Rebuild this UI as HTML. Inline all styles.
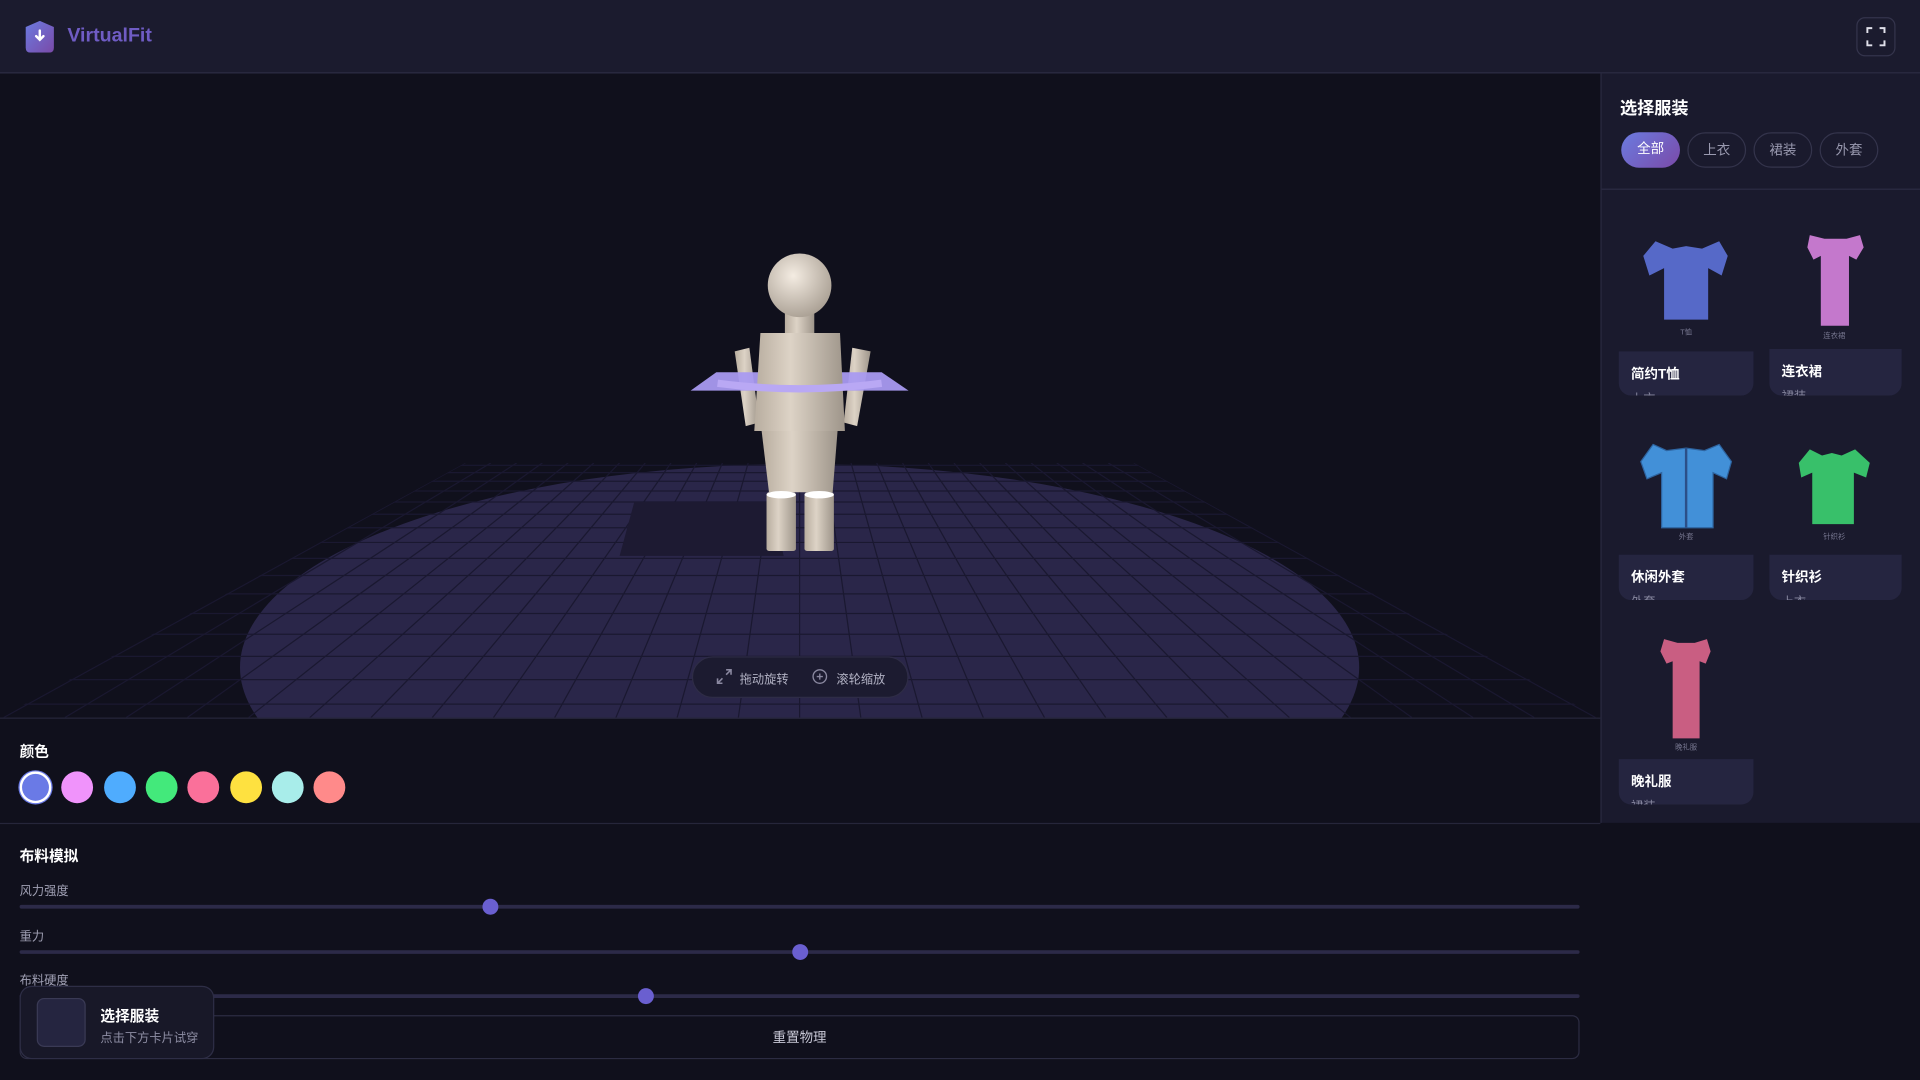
<!DOCTYPE html>
<html><head><meta charset="utf-8">
<style>
*{margin:0;padding:0;box-sizing:border-box}
html,body{width:1920px;height:1080px;overflow:hidden;background:#10101c}
#w{position:absolute;left:0;top:0;width:1568px;height:882px;transform:scale(1.22449);transform-origin:0 0;font-family:"Liberation Sans","Noto Sans CJK SC",sans-serif;color:#e8e8f0}
.a{position:absolute}
.hdr{left:0;top:0;width:1568px;height:60px;background:#1b1b2e;border-bottom:1px solid #2c2c44}
.side{left:1307px;top:60px;width:261px;height:612px;background:#1a1a2d;border-left:1px solid #2a2a40}
.pill{position:absolute;top:48px;height:29px;border:1px solid #34344c;border-radius:15px;font-size:11px;color:#9a9ab0;text-align:center;line-height:29px}
.lab{position:absolute;background:#252540;border-radius:0 0 10px 10px;overflow:hidden}
.lab b{position:absolute;left:10px;top:10px;font-size:11px;color:#fff}
.lab i{position:absolute;left:10px;top:30px;font-size:10px;color:#8888a0;font-style:normal}
.cap{position:absolute;font-size:6px;color:#777790;text-align:center;width:60px}
.dot{position:absolute;top:630px;width:26px;height:26px;border-radius:50%}
.trk{position:absolute;left:16px;width:1274px;height:3px;background:#2c2a48;border-radius:2px}
.knob{position:absolute;width:13px;height:13px;border-radius:50%;background:#6a5fd0}
.sl{position:absolute;left:16px;font-size:10px;color:#a0a0b4}
</style></head><body><div id="w">
<div class="a hdr"></div>
<svg class="a" style="left:20px;top:17px" width="25" height="26" viewBox="0 0 25 26"><defs><linearGradient id="g" x1="0" y1="0" x2="1" y2="1"><stop offset="0" stop-color="#6b7be0"/><stop offset="1" stop-color="#7a4aa8"/></linearGradient></defs><path d="M1 5 L12.5 0 L24 5 L24 22 Q24 26 20 26 L5 26 Q1 26 1 22Z" fill="url(#g)"/><path d="M12.5 8v7M9.5 12.5l3 3 3-3" stroke="#fff" stroke-width="2" fill="none" stroke-linecap="round"/></svg>
<div class="a" style="left:55px;top:21px;font-size:16px;font-weight:bold;color:#6f5cc4">VirtualFit</div>
<div class="a" style="left:1516px;top:14px;width:32px;height:32px;border:1px solid #34344c;border-radius:7px"></div>
<svg class="a" style="left:1524px;top:22px" width="16" height="16" viewBox="0 0 16 16" fill="none" stroke="#e0e0ea" stroke-width="1.6"><path d="M1 5V1h4M11 1h4v4M15 11v4h-4M5 15H1v-4"/></svg>

<svg class="a" style="left:0;top:60px" width="1306" height="527" viewBox="0 60 1306 527">
<defs><clipPath id="c"><polygon points="380,378 926,378 1306,586 0,586"/></clipPath>
<radialGradient id="sk" cx=".4" cy=".35" r=".7"><stop offset="0" stop-color="#f4ece2"/><stop offset="1" stop-color="#a89e92"/></radialGradient>
<linearGradient id="bd" x1="0" x2="1"><stop offset="0" stop-color="#b8ad9f"/><stop offset=".4" stop-color="#ddd3c6"/><stop offset="1" stop-color="#9e958a"/></linearGradient></defs>
<rect x="0" y="60" width="1306" height="527" fill="#10101c"/>
<ellipse cx="653" cy="545" rx="457" ry="166" fill="#2a2649"/>
<g clip-path="url(#c)" stroke="#1a1830" stroke-width="1">
<line x1="0" y1="380" x2="1306" y2="380"/><line x1="0" y1="386" x2="1306" y2="386"/><line x1="0" y1="393" x2="1306" y2="393"/><line x1="0" y1="401" x2="1306" y2="401"/><line x1="0" y1="410" x2="1306" y2="410"/><line x1="0" y1="420" x2="1306" y2="420"/><line x1="0" y1="431" x2="1306" y2="431"/><line x1="0" y1="443" x2="1306" y2="443"/><line x1="0" y1="456" x2="1306" y2="456"/><line x1="0" y1="470" x2="1306" y2="470"/><line x1="0" y1="485" x2="1306" y2="485"/><line x1="0" y1="501" x2="1306" y2="501"/><line x1="0" y1="518" x2="1306" y2="518"/><line x1="0" y1="536" x2="1306" y2="536"/><line x1="0" y1="555" x2="1306" y2="555"/><line x1="0" y1="575" x2="1306" y2="575"/>
<line x1="380" y1="378" x2="3" y2="586"/><line x1="401" y1="378" x2="53" y2="586"/><line x1="422" y1="378" x2="103" y2="586"/><line x1="443" y1="378" x2="153" y2="586"/><line x1="464" y1="378" x2="203" y2="586"/><line x1="485" y1="378" x2="253" y2="586"/><line x1="506" y1="378" x2="303" y2="586"/><line x1="527" y1="378" x2="353" y2="586"/><line x1="548" y1="378" x2="403" y2="586"/><line x1="569" y1="378" x2="453" y2="586"/><line x1="590" y1="378" x2="503" y2="586"/><line x1="611" y1="378" x2="553" y2="586"/><line x1="632" y1="378" x2="603" y2="586"/><line x1="653" y1="378" x2="653" y2="586"/><line x1="674" y1="378" x2="703" y2="586"/><line x1="695" y1="378" x2="753" y2="586"/><line x1="716" y1="378" x2="803" y2="586"/><line x1="737" y1="378" x2="853" y2="586"/><line x1="758" y1="378" x2="903" y2="586"/><line x1="779" y1="378" x2="953" y2="586"/><line x1="800" y1="378" x2="1003" y2="586"/><line x1="821" y1="378" x2="1053" y2="586"/><line x1="842" y1="378" x2="1103" y2="586"/><line x1="863" y1="378" x2="1153" y2="586"/><line x1="884" y1="378" x2="1203" y2="586"/><line x1="905" y1="378" x2="1253" y2="586"/><line x1="926" y1="378" x2="1303" y2="586"/>
</g>
<polygon points="518,410 630,410 640,454 506,454" fill="#1d1a32"/>
<polygon points="600,287 612,284 620,345 609,348" fill="url(#bd)"/>
<polygon points="696,284 711,287 700,348 689,345" fill="url(#bd)"/>
<polygon points="585,304 720,304 742,319 564,319" fill="#a99af0" opacity=".95"/>
<rect x="641" y="255" width="24" height="18" fill="url(#bd)"/>
<circle cx="653" cy="233" r="26" fill="url(#sk)"/>
<polygon points="621,272 686,272 690,352 616,352" fill="url(#bd)"/>
<path d="M586 313 Q653 322 720 313" stroke="#b9a8f4" stroke-width="6" fill="none"/>
<polygon points="622,352 684,352 680,402 628,402" fill="url(#bd)"/>
<rect x="626" y="402" width="24" height="48" rx="2" fill="url(#bd)"/>
<rect x="657" y="402" width="24" height="48" rx="2" fill="url(#bd)"/>
<ellipse cx="638" cy="404" rx="12" ry="3" fill="#fff"/><ellipse cx="669" cy="404" rx="12" ry="3" fill="#fff"/>
</svg>

<div class="a" style="left:565px;top:536px;width:177px;height:34px;border-radius:17px;background:#1c1b30;border:1px solid #2e2c46"></div>
<svg class="a" style="left:585px;top:546px" width="13" height="13" viewBox="0 0 13 13" stroke="#8a88a0" stroke-width="1.3" fill="none"><path d="M8 1h4v4M12 1L8 5M5 12H1V8M1 12l4-4"/></svg>
<div class="a" style="left:604px;top:546px;font-size:10px;color:#b0b0c2">拖动旋转</div>
<svg class="a" style="left:663px;top:546px" width="13" height="13" viewBox="0 0 13 13" stroke="#8a88a0" stroke-width="1.1" fill="none"><circle cx="6.5" cy="6.5" r="5.5"/><path d="M6.5 4v5M4 6.5h5"/></svg>
<div class="a" style="left:683px;top:546px;font-size:10px;color:#b0b0c2">滚轮缩放</div>

<div class="a" style="left:0;top:586px;width:1307px;height:1px;background:#26263a"></div>
<div class="a" style="left:16px;top:605px;font-size:12px;font-weight:bold;color:#fff">颜色</div>
<div class="dot" style="left:16px;background:#6a7ae6;box-shadow:0 0 0 2px #fff inset,0 0 0 1px #6a7ae6"></div>
<div class="dot" style="left:50px;background:#f093fb"></div>
<div class="dot" style="left:85px;background:#4facfe"></div>
<div class="dot" style="left:119px;background:#43e97b"></div>
<div class="dot" style="left:153px;background:#fa709a"></div>
<div class="dot" style="left:188px;background:#fee140"></div>
<div class="dot" style="left:222px;background:#a8edea"></div>
<div class="dot" style="left:256px;background:#ff8a8a"></div>
<div class="a" style="left:0;top:672px;width:1307px;height:1px;background:#26263a"></div>

<div class="a" style="left:16px;top:690px;font-size:12px;font-weight:bold;color:#fff">布料模拟</div>
<div class="sl" style="top:719px">风力强度</div><div class="trk" style="top:739px"></div><div class="knob" style="left:394px;top:734px"></div>
<div class="sl" style="top:756px">重力</div><div class="trk" style="top:776px"></div><div class="knob" style="left:647px;top:771px"></div>
<div class="sl" style="top:792px">布料硬度</div><div class="trk" style="top:812px"></div><div class="knob" style="left:521px;top:807px"></div>
<div class="a" style="left:16px;top:829px;width:1274px;height:36px;border:1px solid #2c2c42;border-radius:6px;text-align:center;line-height:36px;font-size:11px;color:#c8c8d6">重置物理</div>
<div class="a" style="left:16px;top:805px;width:159px;height:60px;background:#181828;border:1px solid #2e2e46;border-radius:10px"></div>
<div class="a" style="left:30px;top:815px;width:40px;height:40px;background:#252540;border-radius:6px;border:1px solid #3a3a55"></div>
<div class="a" style="left:82px;top:821px;font-size:12px;font-weight:bold;color:#fff">选择服装</div>
<div class="a" style="left:82px;top:839px;font-size:10px;color:#8e8ea4">点击下方卡片试穿</div>

<div class="a side">
<div class="a" style="left:15px;top:18px;font-size:14px;font-weight:bold;color:#fff">选择服装</div>
<div class="pill" style="left:16px;width:48px;background:linear-gradient(135deg,#6b7be0,#7a4aa8);border:none;color:#fff;line-height:29px">全部</div>
<div class="pill" style="left:70px;width:48px">上衣</div>
<div class="pill" style="left:124px;width:48px">裙装</div>
<div class="pill" style="left:178px;width:48px">外套</div>
<div class="a" style="left:0;top:94px;width:261px;height:1px;background:#2c2c44"></div>
</div>
<div class="lab" style="left:1322px;top:287px;width:110px;height:36px"><b>简约T恤</b><i>上衣</i></div>
<div class="lab" style="left:1445px;top:285px;width:108px;height:38px"><b>连衣裙</b><i>裙装</i></div>
<div class="lab" style="left:1322px;top:453px;width:110px;height:37px"><b>休闲外套</b><i>外套</i></div>
<div class="lab" style="left:1445px;top:453px;width:108px;height:37px"><b>针织衫</b><i>上衣</i></div>
<div class="lab" style="left:1322px;top:620px;width:110px;height:37px"><b>晚礼服</b><i>裙装</i></div>
<div class="cap" style="left:1347px;top:266px">T恤</div>
<div class="cap" style="left:1468px;top:269px">连衣裙</div>
<div class="cap" style="left:1347px;top:433px">外套</div>
<div class="cap" style="left:1468px;top:433px">针织衫</div>
<div class="cap" style="left:1347px;top:605px">晚礼服</div>
<svg class="a" style="left:0;top:0" width="1568" height="882" viewBox="0 0 1568 882">
<polygon fill="#5669c8" points="1352,197 1366,203 1377,201 1390,203 1404,197 1411,209 1406,225 1395,219 1395,261 1359,261 1359,219 1347,225 1342,209"/>
<polygon fill="#c478cc" points="1478,192 1490,195 1508,195 1519,192 1522,202 1516,212 1510,209 1510,266 1487,266 1487,209 1481,212 1476,202"/>
<polygon fill="#4290d8" stroke="#2e64a0" stroke-width="1" points="1350,363 1361,368 1377,366 1392,368 1404,363 1414,377 1410,391 1399,386 1399,431 1357,431 1357,386 1345,391 1340,377"/>
<line x1="1377" y1="366" x2="1377" y2="431" stroke="#2b4f88" stroke-width="2"/>
<polygon fill="#38c06a" points="1478,367 1488,372 1496,370 1504,372 1515,367 1527,378 1524,390 1514,386 1514,428 1480,428 1480,386 1471,390 1469,378"/>
<polygon fill="#c95e82" points="1359,522 1370,525 1384,525 1394,522 1397,532 1393,542 1388,540 1388,603 1366,603 1366,540 1361,542 1356,532"/>
</svg>
</div></body></html>
